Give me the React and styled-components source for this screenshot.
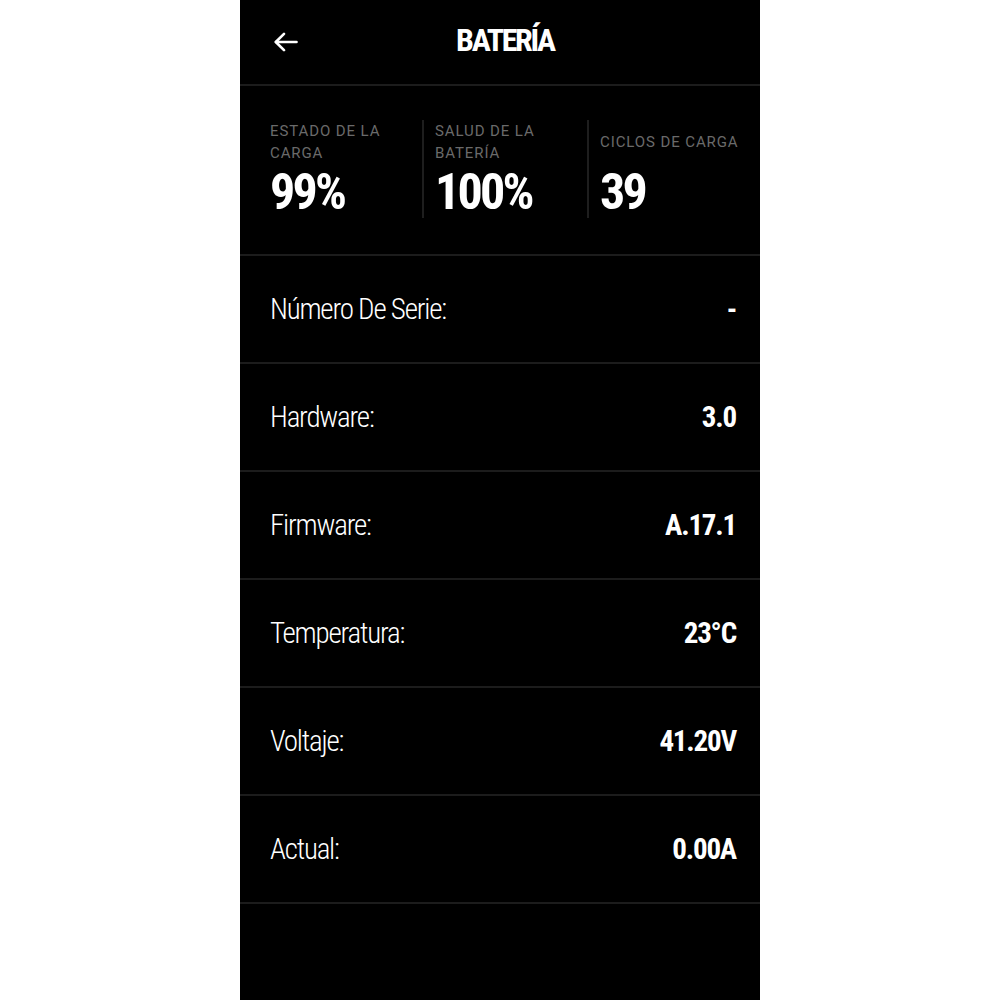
import styled, { createGlobalStyle } from 'styled-components';

const GlobalStyle = createGlobalStyle`
    html, body {
        margin: 0;
        padding: 0;
        background: #fff;
    }
`;

const FONT = `Roboto, "Open Sans", "DejaVu Sans Condensed", sans-serif`;

const Screen = styled.div`
    width: 520px;
    min-height: 1000px;
    margin: 0 auto;
    background: #000;
    color: #fff;
    font-family: ${FONT};
    box-sizing: border-box;
`;

const Header = styled.header`
    height: 84px;
    display: grid;
    grid-template-columns: 1fr auto 1fr;
    align-items: center;
    padding: 0 30px 0 34px;
    border-bottom: 2px solid #1c1c1c;
`;

const BackButton = styled.button`
    justify-self: start;
    background: none;
    border: none;
    padding: 0;
    width: 26px;
    height: 24px;
    display: flex;
    align-items: center;
    color: #fff;
    cursor: pointer;
`;

const Title = styled.h1`
    margin: -4px 0 0 6px;
    font-size: 32px;
    font-weight: 700;
    font-stretch: 75%;
    letter-spacing: -2.3px;
    line-height: 1;
`;

const Stats = styled.section`
    display: grid;
    grid-template-columns: 152px 165px 1fr;
    padding: 34px 16px 36px 30px;
    border-bottom: 2px solid #1c1c1c;
`;

const Stat = styled.div`
    height: 98px;
    box-sizing: border-box;
    border-left: ${p => (p.first ? 'none' : '2px solid #1e1e1e')};
    padding-left: ${p => (p.first ? '0' : '11px')};
`;

const StatLabel = styled.div`
    height: 44px;
    display: flex;
    align-items: center;
    font-size: 15px;
    line-height: 22px;
    letter-spacing: 0.9px;
    color: #6a6a6a;
    text-transform: uppercase;
`;

const StatValue = styled.div`
    margin-top: 3px;
    font-size: 50px;
    line-height: 50px;
    font-weight: 700;
    font-stretch: 75%;
    letter-spacing: -2.8px;
`;

const Row = styled.div`
    height: 106px;
    display: flex;
    align-items: center;
    justify-content: space-between;
    padding: 0 24px 0 30px;
    border-bottom: 2px solid #1c1c1c;
    font-size: 29px;
    font-stretch: 75%;
`;

const RowLabel = styled.span`
    font-weight: 300;
    letter-spacing: -1.2px;
`;

const RowValue = styled.span`
    font-weight: 700;
    letter-spacing: -1.2px;
`;

const stats = [
    { label: 'Estado de la carga', value: '99%' },
    { label: 'Salud de la batería', value: '100%' },
    { label: 'Ciclos de carga', value: '39' },
];

const rows = [
    { label: 'Número De Serie:', value: '-' },
    { label: 'Hardware:', value: '3.0' },
    { label: 'Firmware:', value: 'A.17.1' },
    { label: 'Temperatura:', value: '23°C' },
    { label: 'Voltaje:', value: '41.20V' },
    { label: 'Actual:', value: '0.00A' },
];

export default function App() {
    return (
        <>
            <GlobalStyle />
            <Screen>
                <Header>
                    <BackButton aria-label="Atrás">
                        <svg width="24" height="20" viewBox="0 0 24 20" fill="none" stroke="currentColor" strokeWidth="2.6" strokeLinecap="round" strokeLinejoin="round">
                            <path d="M22.5 10H2" />
                            <path d="M10 1.8L1.8 10L10 18.2" />
                        </svg>
                    </BackButton>
                    <Title>BATERÍA</Title>
                    <span />
                </Header>
                <Stats>
                    {stats.map((s, i) => (
                        <Stat key={s.label} first={i === 0}>
                            <StatLabel>{s.label}</StatLabel>
                            <StatValue>{s.value}</StatValue>
                        </Stat>
                    ))}
                </Stats>
                {rows.map(r => (
                    <Row key={r.label}>
                        <RowLabel>{r.label}</RowLabel>
                        <RowValue>{r.value}</RowValue>
                    </Row>
                ))}
            </Screen>
        </>
    );
}
